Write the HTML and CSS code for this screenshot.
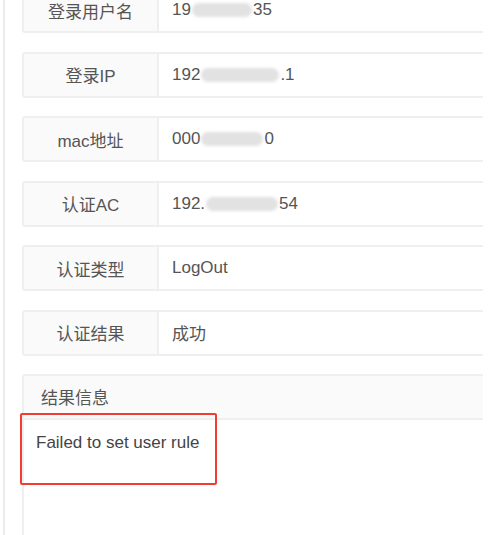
FILE: index.html
```html
<!DOCTYPE html>
<html lang="zh">
<head>
<meta charset="utf-8">
<link rel="stylesheet" href="styles.css">
</head>
<body>
<div class="page">
  <div class="list">
    <div class="row"><div class="label">登录用户名</div><div class="value">19<span class="blur w60"></span>35</div></div>
    <div class="row"><div class="label">登录IP</div><div class="value">192<span class="blur w78"></span>.1</div></div>
    <div class="row"><div class="label">mac地址</div><div class="value">000<span class="blur w62"></span>0</div></div>
    <div class="row"><div class="label">认证AC</div><div class="value">192.<span class="blur w72"></span>54</div></div>
    <div class="row"><div class="label">认证类型</div><div class="value">LogOut</div></div>
    <div class="row"><div class="label">认证结果</div><div class="value">成功</div></div>
    <div class="result">
      <div class="result-head">结果信息</div>
      <div class="result-body">Failed to set user rule</div>
      <div class="mark"></div>
    </div>
  </div>
</div>
</body>
</html>
```

FILE: styles.css
```css
html, body {
  margin: 0;
  padding: 0;
  background: #ffffff;
  overflow: hidden;
  height: 535px;
}
body {
  font-family: "Liberation Sans", Arial, "Noto Sans CJK SC", sans-serif;
  font-size: 17px;
  color: #555555;
}
.page {
  display: flow-root;
  margin-left: 3px;
  border-left: 2px solid #ebebeb;
  height: 535px;
  box-sizing: border-box;
  padding-left: 17px;
  overflow: hidden;
}
.list {
  width: 461px;
  margin-top: -13px;
  display: flex;
  flex-direction: column;
  gap: 18.5px;
}
.row {
  display: grid;
  grid-template-columns: 135px 1fr;
  height: 46px;
  box-sizing: border-box;
  border: 2px solid #efefef;
  border-right: none;
  border-radius: 3px 0 0 3px;
}
.label {
  background: #fafafa;
  border-right: 2px solid #efefef;
  display: flex;
  align-items: center;
  justify-content: center;
  color: #555555;
}
.value {
  display: flex;
  align-items: center;
  padding-left: 13px;
  background: #ffffff;
}
.blur {
  display: inline-block;
  height: 14px;
  border-radius: 7px;
  background: #e2e2e2;
  filter: blur(1.5px);
  margin: 0 1px;
}
.w60 { width: 60px; }
.w78 { width: 78px; }
.w62 { width: 62px; }
.w72 { width: 72px; }
.result {
  position: relative;
  border: 2px solid #efefef;
  border-right: none;
  border-bottom: none;
  border-radius: 3px 0 0 0;
  height: 165px;
}
.result-head {
  height: 44px;
  background: #fafafa;
  border-bottom: 2px solid #efefef;
  display: flex;
  align-items: center;
  padding: 0 0 2px 17px;
  box-sizing: border-box;
  color: #555555;
}
.result-body {
  padding: 13px 0 0 12px;
  color: #444444;
}
.mark {
  position: absolute;
  left: -4px;
  top: 37px;
  width: 197px;
  height: 72px;
  box-sizing: border-box;
  border: 2px solid #f23c33;
  border-radius: 2px;
}
```
